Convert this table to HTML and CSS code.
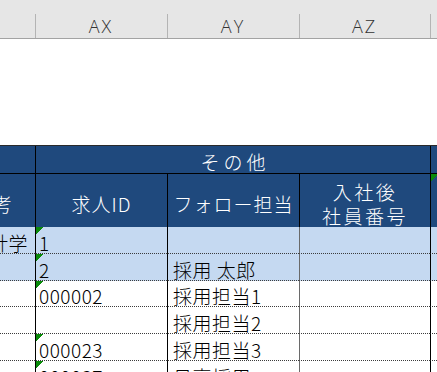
FILE: index.html
```html
<!DOCTYPE html>
<html lang="ja">
<head>
    <meta charset="UTF-8">
    <meta name="viewport" content="width=device-width, initial-scale=1.0">
    <title>採用管理シート</title>
    <link rel="stylesheet" href="styles.css">
</head>
<body>
    <div class="col-heads">
        <div class="col-head"></div>
        <div class="col-head">AX</div>
        <div class="col-head">AY</div>
        <div class="col-head">AZ</div>
        <div class="col-head"></div>
    </div>

    <div class="blank"></div>

    <div class="sheet">
        <!-- 見出し 1段目 -->
        <div class="row head-top">
            <div class="cell hd"></div>
            <div class="cell hd group">その他</div>
            <div class="cell hd"></div>
        </div>
        <!-- 見出し 2段目 -->
        <div class="row head-sub">
            <div class="cell hd cut">考</div>
            <div class="cell hd">求人ID</div>
            <div class="cell hd">フォロー担当</div>
            <div class="cell hd wide">入社後<br>社員番号</div>
            <div class="cell hd mark"></div>
        </div>

        <div class="row data hl">
            <div class="cell cut">統計学</div>
            <div class="cell mark">1</div>
            <div class="cell"></div>
            <div class="cell"></div>
            <div class="cell"></div>
        </div>
        <div class="row data hl">
            <div class="cell"></div>
            <div class="cell mark">2</div>
            <div class="cell">採用 太郎</div>
            <div class="cell"></div>
            <div class="cell"></div>
        </div>
        <div class="row data short">
            <div class="cell"></div>
            <div class="cell mark">000002</div>
            <div class="cell">採用担当1</div>
            <div class="cell"></div>
            <div class="cell"></div>
        </div>
        <div class="row data">
            <div class="cell"></div>
            <div class="cell"></div>
            <div class="cell">採用担当2</div>
            <div class="cell"></div>
            <div class="cell"></div>
        </div>
        <div class="row data">
            <div class="cell"></div>
            <div class="cell mark">000023</div>
            <div class="cell">採用担当3</div>
            <div class="cell"></div>
            <div class="cell"></div>
        </div>
        <div class="row data">
            <div class="cell"></div>
            <div class="cell mark">000037</div>
            <div class="cell">日高採用</div>
            <div class="cell"></div>
            <div class="cell"></div>
        </div>
    </div>
</body>
</html>
```

FILE: styles.css
```css
* {
    box-sizing: border-box;
}
body {
    margin: 0;
    font-family: "Noto Sans CJK JP", "Noto Sans", sans-serif;
    font-weight: 300;
    color: #000;
    background: #fff;
    overflow: hidden;
}

/* 列番号の帯 */
.col-heads {
    display: grid;
    grid-template-columns: 35px 132px 132px 131px 1fr;
    height: 39px;
    background: #e6e6e6;
    border-bottom: 1px solid #a3a3a3;
}
.col-head {
    display: flex;
    align-items: flex-end;
    justify-content: center;
    padding-bottom: 1px;
    font-family: "Open Sans", sans-serif;
    font-weight: 300;
    font-size: 18px;
    line-height: 22px;
    letter-spacing: 2px;
    color: #333;
    background: linear-gradient(#b4b4b4, #b4b4b4) left bottom / 1px 24px no-repeat;
}
.col-head:first-child {
    background: none;
}

.blank {
    height: 106px;
}

/* シート本体 */
.sheet {
    border-top: 1px solid #2a2a2a;
}
.row {
    display: grid;
    grid-template-columns: 35px 132px 132px 131px 1fr;
}
.cell {
    display: flex;
    overflow: hidden;
    white-space: nowrap;
    border-left: 1px solid #000;
}
.cell:first-child {
    border-left: none;
}

/* 見出し */
.hd {
    align-items: center;
    justify-content: center;
    text-align: center;
    background: #1f497d;
    color: #fff;
    font-size: 19px;
    line-height: 24px;
    letter-spacing: 1px;
}
.head-top .hd {
    height: 28px;
    padding-top: 4px;
    border-bottom: 1px solid #000;
}
.head-top .group {
    grid-column: span 3;
    letter-spacing: 4px;
    padding-left: 4px;
}
.head-sub .hd {
    height: 53px;
    padding-top: 6px;
}
.hd.wide {
    letter-spacing: 2.5px;
}
.hd.cut {
    justify-content: flex-end;
    padding-right: 22px;
}

/* 明細行 */
.data .cell {
    height: 27px;
    align-items: flex-end;
    padding: 0 0 1px 3px;
    font-size: 19px;
    line-height: 19px;
    letter-spacing: 0.5px;
    border-bottom: 1px dotted #3c3c3c;
}
.data.short .cell {
    height: 26px;
}
.data .cell:nth-child(3) {
    padding-left: 5px;
}
.data .cell:nth-child(4) {
    border-left-color: #6a6a6a;
}
.data .cell.cut {
    justify-content: flex-end;
    padding-right: 7px;
}
.hl .cell {
    background-color: #c5d9f1;
}

/* コメント付きセルの緑の三角 */
.mark {
    background-image: linear-gradient(to bottom right, #0a8a0a 50%, transparent 50%);
    background-size: 8px 8px;
    background-position: left top;
    background-repeat: no-repeat;
}
```
